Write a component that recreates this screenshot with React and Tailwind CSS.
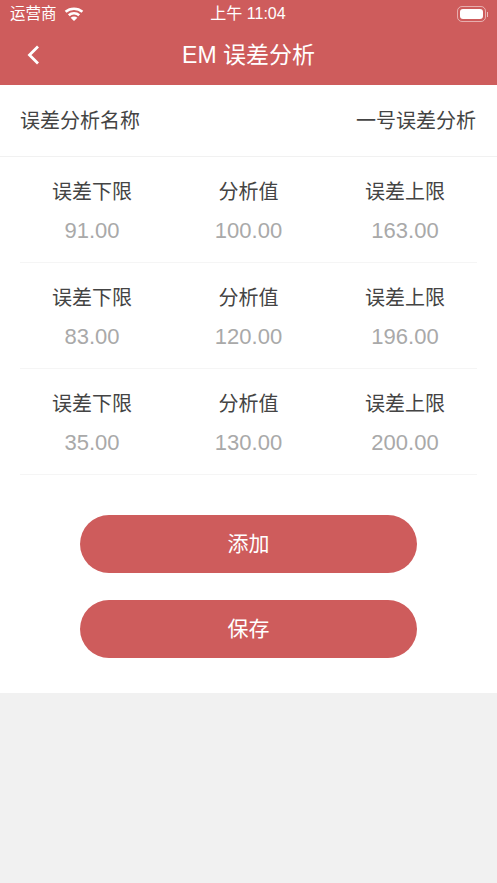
const rows = [
  { low: "91.00", value: "100.00", high: "163.00" },
  { low: "83.00", value: "120.00", high: "196.00" },
  { low: "35.00", value: "130.00", high: "200.00" },
];

function WifiIcon() {
  return (
    <svg width="20" height="14" viewBox="0 0 20 15" fill="none" stroke="white" strokeWidth="2.8">
      <path d="M1 5.200C6 .8 14 .8 19 5.200" />
      <path d="M4.400 8.800C7.600 6 12.400 6 15.600 8.800" />
      <path d="M10 15 6.400 11.400C8.400 9.800 11.600 9.800 13.600 11.400Z" fill="white" stroke="none" />
    </svg>
  );
}

function Battery() {
  return (
    <div className="flex items-center gap-[1px]">
      <div className="w-[29px] h-[16px] rounded-[5px] border border-white/50 p-[2px]">
        <div className="w-full h-full rounded-[3px] bg-white" />
      </div>
      <div className="w-[1px] h-[5px] bg-white/60" />
    </div>
  );
}

function Cell({ title, value }) {
  return (
    <div className="w-[144px] flex flex-col items-center">
      <div className="text-[20px] leading-[26px] text-[#444444]">{title}</div>
      <div className="mt-[13px] text-[22px] leading-[26px] text-[#a9a9a9]">{value}</div>
    </div>
  );
}

export default function App() {
  return (
    <div
      className="w-[497px] h-[883px] bg-[#f1f1f1] flex flex-col overflow-hidden"
      style={{ fontFamily: '"Liberation Sans", "Noto Sans CJK SC", sans-serif' }}
    >
      {/* Header */}
      <div className="h-[85px] bg-[#ce5c5c] text-white flex flex-col">
        <div className="h-[28px] pl-[10px] pr-[9px] grid grid-cols-3 items-center">
          <div className="flex items-center gap-[7px]">
            <span className="text-[15.5px] leading-[28px]">运营商</span>
            <WifiIcon />
          </div>
          <div className="text-center text-[16px] leading-[28px] pr-[2px]">上午 11:04</div>
          <div className="flex justify-end">
            <Battery />
          </div>
        </div>
        <div className="flex-1 relative flex items-center justify-center pb-[3px]">
          <svg
            className="absolute left-[27px] top-[17px]"
            width="13"
            height="20"
            viewBox="0 0 13 20"
            fill="none"
            stroke="white"
            strokeWidth="2.8"
          >
            <path d="M11 1.500 2.500 10l8.500 8.500" />
          </svg>
          <span className="text-[23px] leading-[28px]">EM 误差分析</span>
        </div>
      </div>

      {/* Content */}
      <div className="h-[608px] bg-white">
        <div className="h-[72px] pl-[20px] pr-[21px] flex items-center justify-between border-b border-[#f1f1f1] text-[20px] text-[#444444]">
          <span>误差分析名称</span>
          <span>一号误差分析</span>
        </div>
        <div className="px-[20px]">
          {rows.map((row) => (
            <div key={row.value} className="h-[106px] pt-[22px] flex justify-between border-b border-[#f5f5f5]">
              <Cell title="误差下限" value={row.low} />
              <Cell title="分析值" value={row.value} />
              <Cell title="误差上限" value={row.high} />
            </div>
          ))}
        </div>
        <div className="mt-[40px] flex flex-col items-center gap-[27px]">
          <button className="w-[337px] h-[58px] rounded-full bg-[#ce5c5c] text-white text-[21px]">添加</button>
          <button className="w-[337px] h-[58px] rounded-full bg-[#ce5c5c] text-white text-[21px]">保存</button>
        </div>
      </div>
    </div>
  );
}
